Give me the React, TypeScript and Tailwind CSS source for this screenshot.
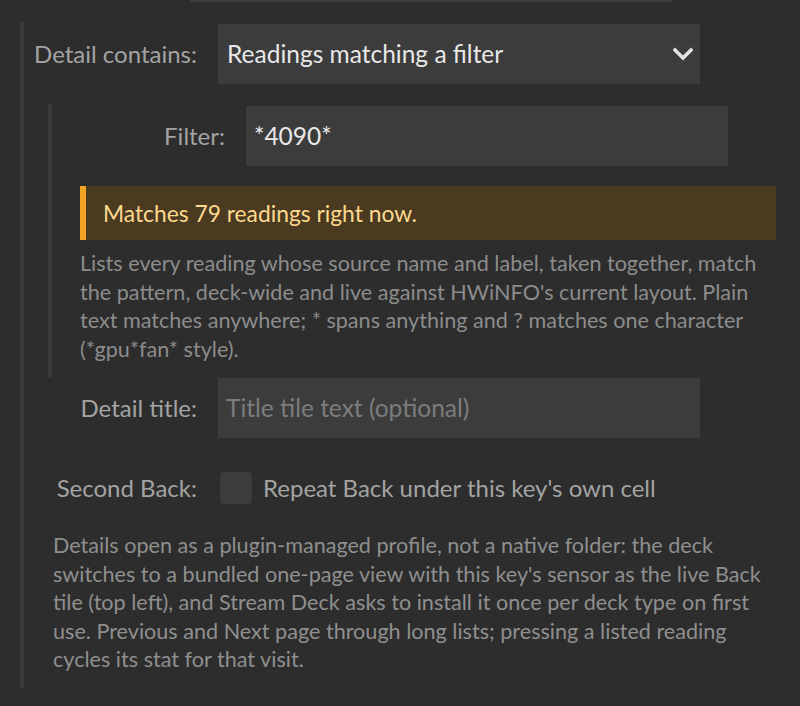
import React from 'react';

const FONT = "font-['Lato','Noto_Sans',sans-serif]";

const Row: React.FC<{ label: string; className?: string; children: React.ReactNode }> = ({ label, className = '', children }) => (
  <div className={`flex h-[60px] items-center gap-[21px] ${className}`}>
    <div className="w-[173px] shrink-0 text-right text-[24px] text-[#a3a3a3]">{label}</div>
    {children}
  </div>
);

const Chevron = () => (
  <svg width="20" height="14" viewBox="0 0 20 14" className="shrink-0">
    <polyline points="2,3 10,11 18,3" fill="none" stroke="#e2e2e2" strokeWidth="3.6" strokeLinecap="square" />
  </svg>
);

export default function App() {
  return (
    <div className={`min-h-screen bg-[#2d2d2d] ${FONT}`}>
      <div className="ml-[190px] h-[2px] w-[482px] bg-[#3c3c3c]" />

      <div className="ml-[20px] mt-[20px] border-l-4 border-[#3a3a3a] pt-[2px] pb-[14px]">
        <Row label="Detail contains:">
          <div className="flex h-[60px] w-[482px] items-center justify-between bg-[#3c3c3c] pl-[9px] pr-[7px] text-[24.5px] text-[#e8e8e8]">
            <span>Readings matching a filter</span>
            <Chevron />
          </div>
        </Row>

        <div className="ml-[24px] mt-[20px] border-l-4 border-[#3a3a3a] pt-[2px] pb-[14px]">
          <Row label="Filter:">
            <div className="flex h-[60px] w-[482px] items-center bg-[#3c3c3c] pl-[8px] text-[24.5px] text-[#e8e8e8]">
              *4090*
            </div>
          </Row>

          <div className="ml-[28px] mt-[20px] flex h-[54px] w-[696px] items-center border-l-[6px] border-[#f2a424] bg-[#4a3a20] pl-[17px] text-[22.8px] text-[#ffd98e]">
            Matches 79 readings right now.
          </div>

          <p className="ml-[28px] mt-[9px] w-[696px] text-[21.6px] leading-[28.5px] text-[#8c8c8c]">
            Lists every reading whose source name and label, taken together, match the pattern, deck-wide and live
            against HWiNFO's current layout. Plain text matches anywhere; * spans anything and ? matches one character
            (*gpu*fan* style).
          </p>
        </div>

        <Row label="Detail title:" className="mt-[1px]">
          <div className="flex h-[60px] w-[482px] items-center bg-[#3c3c3c] pl-[8px] text-[24.5px] text-[#7c7c7c]">
            Title tile text (optional)
          </div>
        </Row>

        <Row label="Second Back:" className="mt-[20px]">
          <label className="flex items-center gap-[11px] text-[24px] text-[#a3a3a3]">
            <span className="ml-[2px] h-[32px] w-[32px] rounded-[4px] bg-[#3c3c3c]" />
            Repeat Back under this key's own cell
          </label>
        </Row>

        <p className="ml-[29px] mt-[13px] w-[723px] text-[21.6px] leading-[28.6px] text-[#8f8f8f]">
          Details open as a plugin-managed profile, not a native folder: the deck switches to a bundled one-page view
          with this key's sensor as the live Back tile (top left), and Stream Deck asks to install it once per deck type
          on first use. Previous and Next page through long lists; pressing a listed reading cycles its stat for that
          visit.
        </p>
      </div>
    </div>
  );
}
